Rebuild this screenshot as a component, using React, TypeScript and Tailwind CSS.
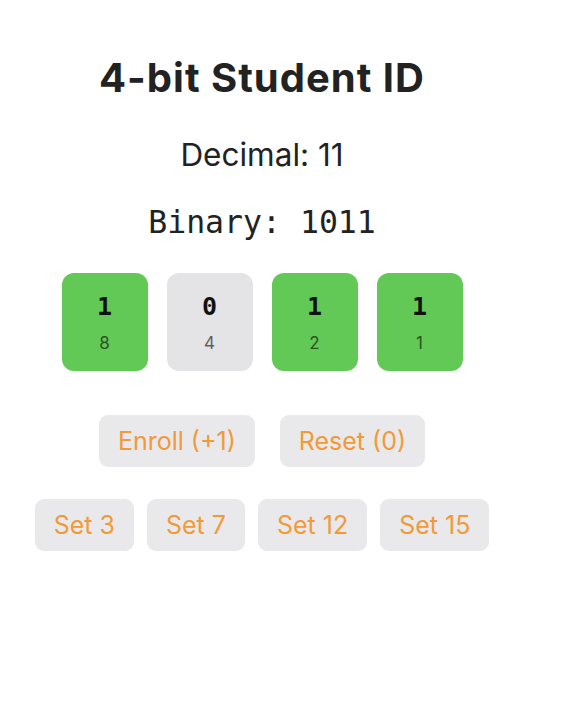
import React, { useState } from 'react';

const WEIGHTS = [8, 4, 2, 1];

export default function App() {
  const [value, setValue] = useState(11);
  const bits = WEIGHTS.map((w) => ((value & w) ? 1 : 0));
  const binary = value.toString(2).padStart(4, '0');

  const btn =
    'h-[52px] rounded-[9px] bg-[#e9e9eb] px-[19px] text-[25px] text-[#f19a38] leading-none';

  return (
    <div className="w-[524px] min-h-[724px] bg-white flex flex-col items-center font-['Inter','Liberation_Sans',sans-serif] text-[#222]">
      <h1 className="mt-[54px] text-[40px] font-bold leading-[48px] tracking-[1px]">4-bit Student ID</h1>
      <div className="mt-[35px] text-[31.5px] leading-[36px]">Decimal: {value}</div>
      <div className="mt-[31px] font-['DejaVu_Sans_Mono','Liberation_Mono',monospace] text-[31.5px] leading-[36px]">
        Binary: {binary}
      </div>
      <div className="mt-[33px] flex gap-[19px]">
        {bits.map((b, i) => (
          <div
            key={i}
            className={
              'w-[86px] h-[98px] rounded-[12px] flex flex-col items-center ' +
              (b ? 'bg-[#63c956]' : 'bg-[#e4e4e7]')
            }
          >
            <span className="mt-[20px] font-['DejaVu_Sans_Mono','Liberation_Mono',monospace] font-bold text-[25px] leading-[28px] text-[#111]">
              {b}
            </span>
            <span
              className={
                'mt-[13px] text-[17px] leading-[18px] ' + (b ? 'text-[#2a5424]' : 'text-[#5f5f5f]')
              }
            >
              {WEIGHTS[i]}
            </span>
          </div>
        ))}
      </div>
      <div className="mt-[44px] flex gap-[25px]">
        <button className={btn} onClick={() => setValue((v) => (v + 1) % 16)}>
          Enroll (+1)
        </button>
        <button className={btn} onClick={() => setValue(0)}>
          Reset (0)
        </button>
      </div>
      <div className="mt-[32px] flex gap-[13px]">
        {[3, 7, 12, 15].map((n) => (
          <button key={n} className={btn} onClick={() => setValue(n)}>
            Set {n}
          </button>
        ))}
      </div>
    </div>
  );
}
